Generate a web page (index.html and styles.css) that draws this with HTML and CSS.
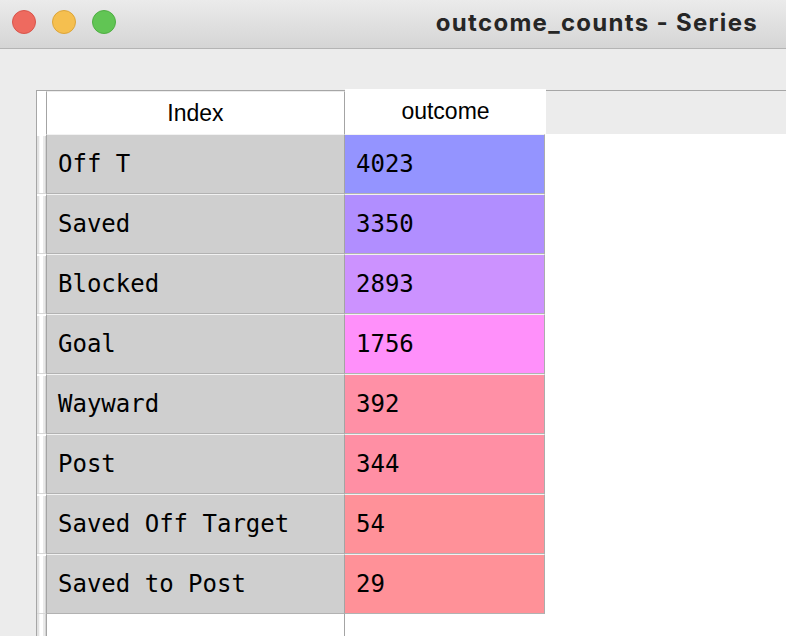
FILE: index.html
```html
<!DOCTYPE html>
<html>
<head>
<meta charset="utf-8">
<link rel="stylesheet" href="styles.css">
</head>
<body>
<div class="window">
  <div class="titlebar">
    <div class="lights">
      <span class="light red"></span>
      <span class="light yellow"></span>
      <span class="light green"></span>
    </div>
    <div class="title">outcome_counts - Series</div>
  </div>
  <div class="content">
    <div class="table">
      <div class="row head">
        <div class="strip"></div>
        <div class="idx">Index</div>
        <div class="val">outcome</div>
        <div class="fill"></div>
      </div>
      <div class="row data"><div class="strip"></div><div class="idx">Off T</div><div class="val" style="background:#9494ff">4023</div><div class="fill"></div></div>
      <div class="row data"><div class="strip"></div><div class="idx">Saved</div><div class="val" style="background:#b18eff">3350</div><div class="fill"></div></div>
      <div class="row data"><div class="strip"></div><div class="idx">Blocked</div><div class="val" style="background:#cc92ff">2893</div><div class="fill"></div></div>
      <div class="row data"><div class="strip"></div><div class="idx">Goal</div><div class="val" style="background:#ff90fa">1756</div><div class="fill"></div></div>
      <div class="row data"><div class="strip"></div><div class="idx">Wayward</div><div class="val" style="background:#ff90a6">392</div><div class="fill"></div></div>
      <div class="row data"><div class="strip"></div><div class="idx">Post</div><div class="val" style="background:#ff8fa4">344</div><div class="fill"></div></div>
      <div class="row data"><div class="strip"></div><div class="idx">Saved Off Target</div><div class="val" style="background:#ff9199">54</div><div class="fill"></div></div>
      <div class="row data"><div class="strip"></div><div class="idx">Saved to Post</div><div class="val" style="background:#ff9198">29</div><div class="fill"></div></div>
      <div class="row tail"><div class="strip"></div><div class="idx"></div><div class="fill"></div></div>
    </div>
  </div>
</div>
</body>
</html>
```

FILE: styles.css
```css
html, body {
  margin: 0;
  padding: 0;
  background: #ececec;
  overflow: hidden;
}

.window {
  width: 786px;
  height: 636px;
  display: flex;
  flex-direction: column;
  background: #ececec;
}

.titlebar {
  height: 48px;
  flex: none;
  display: flex;
  align-items: center;
  justify-content: space-between;
  background: linear-gradient(to bottom, #ebebeb, #d5d5d5);
  border-bottom: 1px solid #b4b4b4;
}

.lights {
  display: flex;
  gap: 16px;
  padding-left: 12px;
  margin-top: -4px;
}

.light {
  width: 22px;
  height: 22px;
  border-radius: 50%;
  border: 1px solid transparent;
}

.red { background: #ee6a5f; border-color: #d8554b; }
.yellow { background: #f5bf4f; border-color: #dca53a; }
.green { background: #61c554; border-color: #4fae43; }

.title {
  font-family: Inter, "Liberation Sans", Arial, sans-serif;
  font-weight: bold;
  font-size: 24px;
  letter-spacing: 1.3px;
  color: #262626;
  padding-right: 28px;
  margin-top: -4px;
}

.content {
  flex: 1;
  padding: 41px 0 0 36px;
  display: flex;
  flex-direction: column;
}

.table {
  flex: 1;
  display: flex;
  flex-direction: column;
  background: #fff;
  border-top: 1px solid #a6a6a6;
  border-left: 1px solid #a6a6a6;
}

.row {
  display: flex;
  flex: none;
}

.strip {
  width: 9px;
  flex: none;
}

.idx {
  box-sizing: border-box;
  width: 299px;
  flex: none;
  border-left: 1px solid #a4a4a4;
  border-right: 1px solid #a4a4a4;
  display: flex;
  align-items: center;
}

.val {
  box-sizing: border-box;
  flex: none;
  display: flex;
  align-items: center;
}

.fill {
  flex: 1;
}

/* header */
.head {
  height: 43px;
}

.head .strip {
  background: #fff;
}

.head .idx,
.head .val {
  justify-content: center;
  background: #fff;
  font-family: "Liberation Sans", Arial, sans-serif;
  font-size: 23px;
  color: #000;
  border-top: 1px solid #fff;
}

.head .idx {
  border-top-color: #ececec;
}

.head .val {
  width: 201px;
  margin-top: -2px;
  height: 43px;
}

.head .fill {
  background: #ececec;
}

/* data rows */
.data {
  height: 60px;
}

.data .strip {
  background: linear-gradient(to right, #e2e2e2 0, #e2e2e2 2px, #f6f6f6 2px, #f6f6f6 3px, #ffffff 3px, #ffffff 6px, #eaeaea 6px, #eaeaea 8px, #d4d4d4 8px);
  border-top: 2px solid #fff;
  border-bottom: 1px solid #d8d8d8;
  box-sizing: border-box;
}

.data .idx,
.data .val {
  height: 60px;
  border-top: 1px solid #f2f2f2;
  border-bottom: 1px solid #b2b2b2;
  font-family: "DejaVu Sans Mono", "Liberation Mono", monospace;
  font-size: 24px;
  color: #000;
  padding-left: 11px;
}

.data .idx {
  background: #cfcfcf;
}

.data .val {
  border-right: 1px solid #acacac;
  width: 200px;
}

.tail {
  flex: 1;
}

.tail .strip {
  background: linear-gradient(to right, #e2e2e2 0, #e2e2e2 2px, #f6f6f6 2px, #f6f6f6 3px, #ffffff 3px, #ffffff 6px, #eaeaea 6px, #eaeaea 8px, #d4d4d4 8px);
}

.tail .idx {
  background: #fff;
}
```
